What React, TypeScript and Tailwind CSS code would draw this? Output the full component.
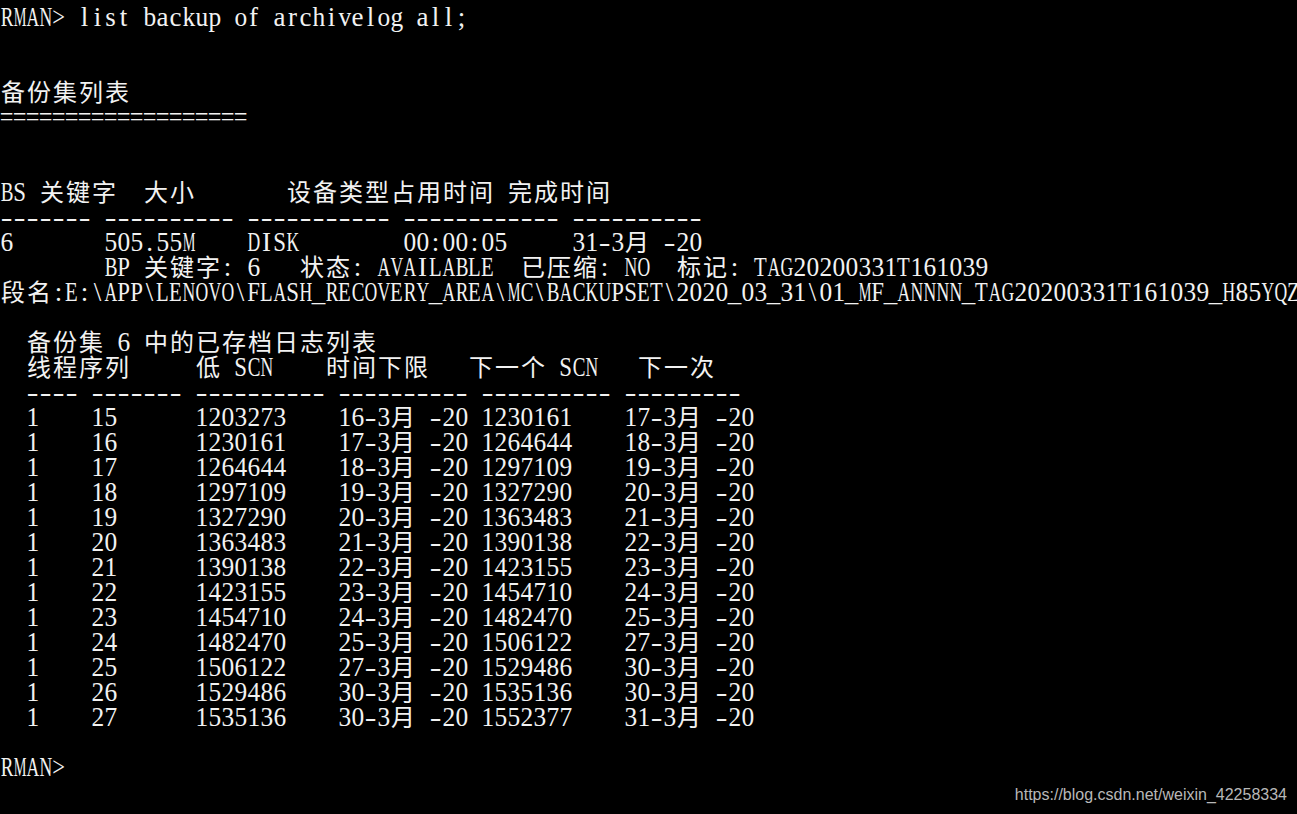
// Times-style advance widths (per em) used to squeeze each glyph into a 13px console cell
const ADV: Record<string, number> = {
  " ": 0.25, "-": 0.333, ".": 0.25, ":": 0.278, ";": 0.278, ">": 0.564, "=": 0.564,
  "_": 0.5, "\\": 0.278,
  A: 0.722, B: 0.667, C: 0.667, D: 0.722, E: 0.611, F: 0.556, G: 0.722, H: 0.722,
  I: 0.333, K: 0.722, L: 0.611, M: 0.889, N: 0.722, O: 0.722, P: 0.556, Q: 0.722,
  R: 0.667, S: 0.556, T: 0.611, U: 0.722, V: 0.722, W: 0.944, Y: 0.722, Z: 0.611,
  a: 0.444, b: 0.5, c: 0.444, d: 0.5, e: 0.444, f: 0.333, g: 0.5, h: 0.5, i: 0.278,
  k: 0.5, l: 0.278, o: 0.5, p: 0.5, r: 0.333, s: 0.389, t: 0.278, u: 0.5, v: 0.5,
};

const sp = (n: number) => " ".repeat(n);

const rows: [string, string, string, string, string][] = [
  ["15", "1203273", "16", "1230161", "17"],
  ["16", "1230161", "17", "1264644", "18"],
  ["17", "1264644", "18", "1297109", "19"],
  ["18", "1297109", "19", "1327290", "20"],
  ["19", "1327290", "20", "1363483", "21"],
  ["20", "1363483", "21", "1390138", "22"],
  ["21", "1390138", "22", "1423155", "23"],
  ["22", "1423155", "23", "1454710", "24"],
  ["23", "1454710", "24", "1482470", "25"],
  ["24", "1482470", "25", "1506122", "27"],
  ["25", "1506122", "27", "1529486", "30"],
  ["26", "1529486", "30", "1535136", "30"],
  ["27", "1535136", "30", "1552377", "31"],
];

const lines: string[] = [
  "RMAN> list backup of archivelog all;",
  "",
  "",
  "备份集列表",
  "===================",
  "",
  "",
  "BS 关键字" + sp(2) + "大小" + sp(7) + "设备类型占用时间 完成时间",
  "------- ---------- ----------- ------------ ----------",
  "6" + sp(7) + "505.55M" + sp(4) + "DISK" + sp(8) + "00:00:05" + sp(5) + "31-3月 -20",
  sp(8) + "BP 关键字: 6" + sp(3) + "状态: AVAILABLE" + sp(2) + "已压缩: NO" + sp(2) + "标记: TAG20200331T161039",
  "段名:E:\\APP\\LENOVO\\FLASH_RECOVERY_AREA\\MC\\BACKUPSET\\2020_03_31\\01_MF_ANNNN_TAG20200331T161039_H85YQZ",
  "",
  sp(2) + "备份集 6 中的已存档日志列表",
  sp(2) + "线程序列" + sp(5) + "低 SCN" + sp(4) + "时间下限" + sp(3) + "下一个 SCN" + sp(3) + "下一次",
  sp(2) + "---- ------- ---------- ---------- ---------- ---------",
  ...rows.map(
    ([seq, low, d1, next, d2]) =>
      sp(2) + "1" + sp(4) + seq + sp(6) + low + sp(4) + d1 + "-3月 -20 " + next + sp(4) + d2 + "-3月 -20"
  ),
  "",
  "RMAN>",
];

function scaleFor(ch: string) {
  if (ch === "-") return 1.3;
  if (ch === "=") return 0.9;
  if (ch === "_") return 1;
  const w = ADV[ch] ?? 0.5;
  return Math.min(1, 0.47 / w);
}

function ConsoleLine({ text }: { text: string }) {
  const chars = Array.from(text);
  return (
    <div className="flex h-[25px] whitespace-pre">
      {chars.map((ch, i) =>
        ch.codePointAt(0)! >= 0x2e80 ? (
          <span
            key={i}
            className="flex h-[25px] w-[26px] shrink-0 justify-center font-['Noto_Sans_CJK_SC',sans-serif] text-[24px] leading-[21px]"
          >
            {ch}
          </span>
        ) : (
          <span
            key={i}
            className="flex h-[25px] w-[13px] shrink-0 justify-center font-['Liberation_Serif',serif] text-[27px] leading-[25px]"
          >
            <span className="inline-block" style={{ transform: `scaleX(${scaleFor(ch)})` }}>
              {ch}
            </span>
          </span>
        )
      )}
    </div>
  );
}

export default function App() {
  return (
    <div className="relative h-[814px] w-full overflow-hidden bg-black pt-[5px] text-[#f2f2f2]">
      {lines.map((l, i) => (
        <ConsoleLine key={i} text={l} />
      ))}
      <div className="absolute bottom-[9px] right-[10px] font-['Liberation_Sans',Arial,sans-serif] text-[16px] leading-[20px] text-[#b8b8b8]">
        https://blog.csdn.net/weixin_42258334
      </div>
    </div>
  );
}
